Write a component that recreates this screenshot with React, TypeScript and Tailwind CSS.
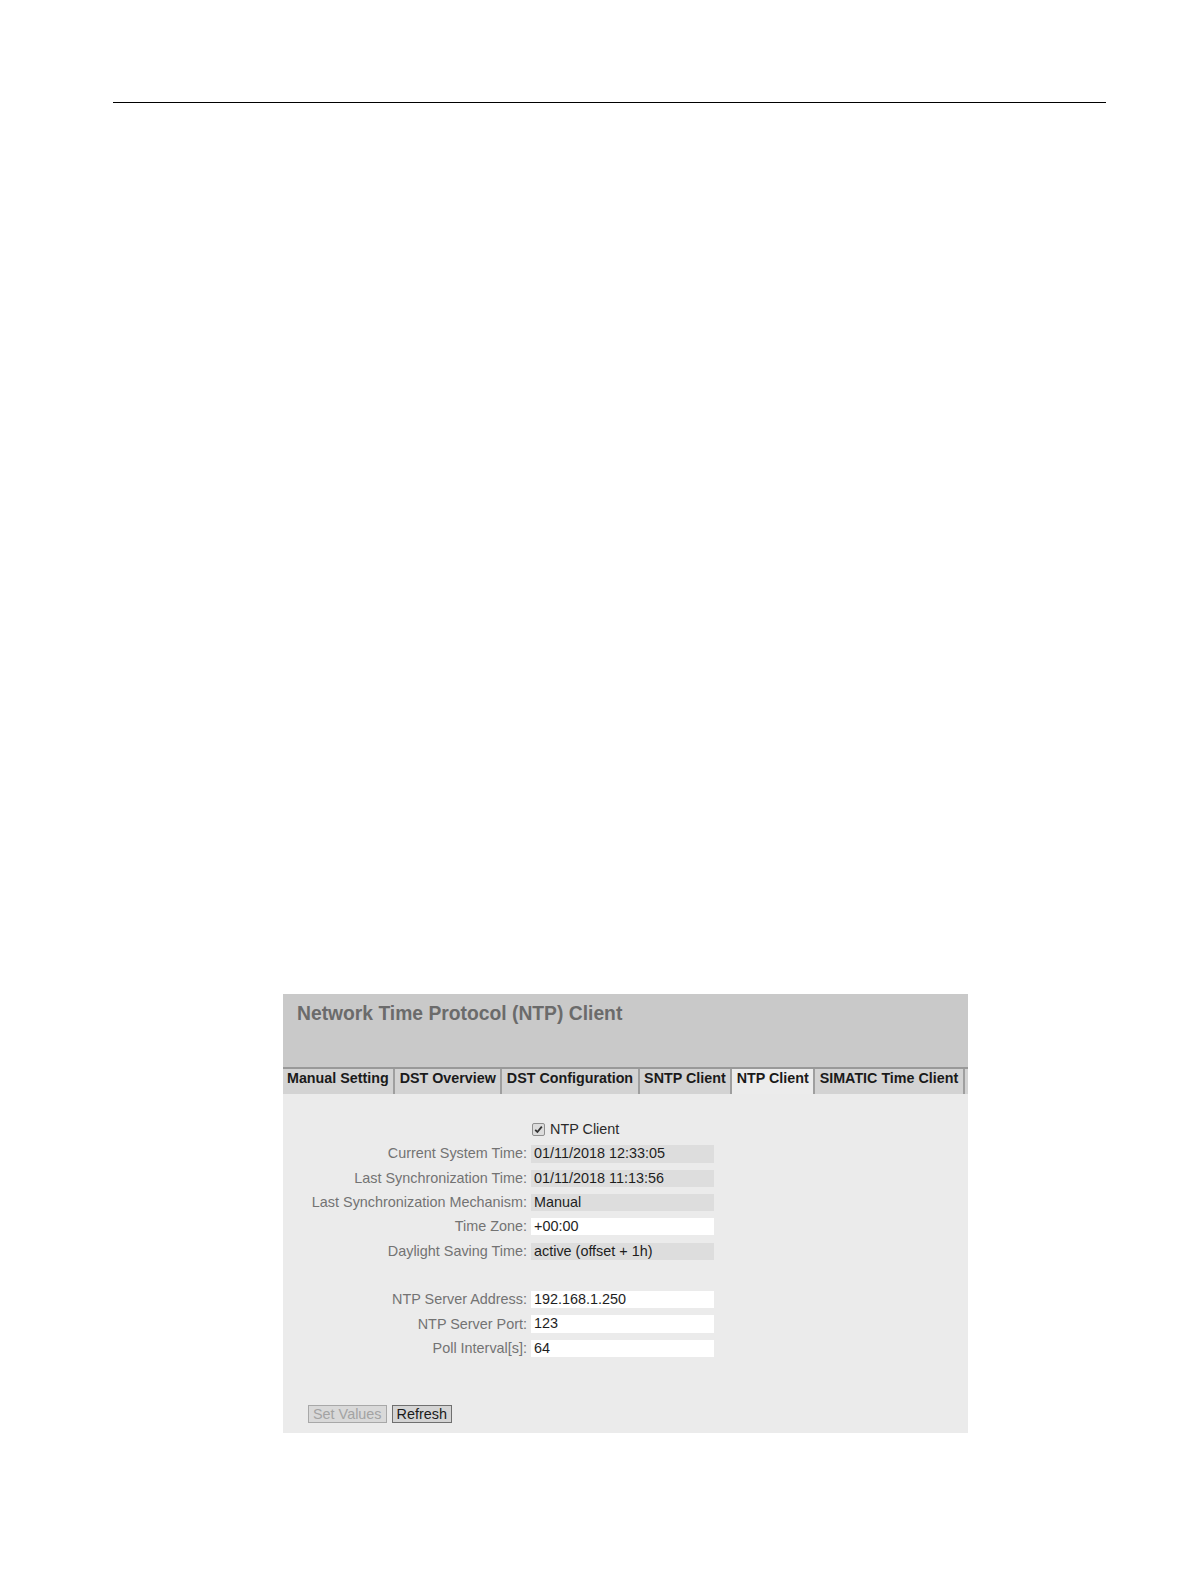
import React from "react";

const tabs = [
  { name: "Manual Setting", active: false },
  { name: "DST Overview", active: false },
  { name: "DST Configuration", active: false },
  { name: "SNTP Client", active: false },
  { name: "NTP Client", active: true },
  { name: "SIMATIC Time Client", active: false },
];

const rows1: { label: string; value: string; editable: boolean }[] = [
  { label: "Current System Time:", value: "01/11/2018 12:33:05", editable: false },
  { label: "Last Synchronization Time:", value: "01/11/2018 11:13:56", editable: false },
  { label: "Last Synchronization Mechanism:", value: "Manual", editable: false },
  { label: "Time Zone:", value: "+00:00", editable: true },
  { label: "Daylight Saving Time:", value: "active (offset + 1h)", editable: false },
];

const rows2: { label: string; value: string; editable: boolean }[] = [
  { label: "NTP Server Address:", value: "192.168.1.250", editable: true },
  { label: "NTP Server Port:", value: "123", editable: true },
  { label: "Poll Interval[s]:", value: "64", editable: true },
];

function FormRow({ label, value, editable }: { label: string; value: string; editable: boolean }) {
  return (
    <div className="flex h-[24.3px] items-center">
      <div className="w-[244px] whitespace-nowrap text-right text-[14.4px] leading-[17px] text-[#737373]">
        {label}
      </div>
      <div
        className={
          "ml-[4px] h-[17.2px] w-[183px] pl-[3px] text-[14.4px] leading-[17.2px] text-[#1e1e1e] " +
          (editable ? "bg-white" : "bg-[#dddddd]")
        }
      >
        {value}
      </div>
    </div>
  );
}

export default function App() {
  return (
    <div
      className="w-full overflow-hidden bg-white pb-[100px]"
      style={{ fontFamily: '"Liberation Sans", Arial, sans-serif' }}
    >
      <div className="pt-[102px]">
        <div className="ml-[113px] h-px w-[993px] bg-black" />
      </div>

      <div className="ml-[283px] mt-[891px] w-[685px] bg-[#ebebeb]">
        {/* Header */}
        <div className="h-[73px] bg-[#c9c9c9] pl-[14px] pt-[9px]">
          <div className="text-[19.3px] font-bold leading-[22px] text-[#6b6b6b]">
            Network Time Protocol (NTP) Client
          </div>
        </div>

        {/* Tabs */}
        <div className="flex h-[27px] border-t-2 border-[#999999] bg-[#d3d3d3]">
          {tabs.map((t, i) => (
            <div
              key={t.name}
              className={
                "whitespace-nowrap border-r-2 border-[#9f9f9f] pt-[1px] text-[14.3px] font-bold leading-[17px] text-[#1a1a1a] " +
                (i === 0 ? "pl-[4px] pr-[4.5px] " : "px-[4.5px] ") +
                (t.active ? "bg-[#ececec]" : "bg-[#d3d3d3]")
              }
            >
              {t.name}
            </div>
          ))}
        </div>

        {/* Content */}
        <div className="pt-[23.5px]">
          <div className="flex h-[24.3px] items-center">
            <div className="w-[244px]" />
            <div className="ml-[5px] flex items-center">
              <span className="flex h-[13px] w-[13px] items-center justify-center rounded-[2px] border border-[#8f8f8f] bg-[#dcdcdc]">
                <svg width="9" height="9" viewBox="0 0 9 9">
                  <path d="M1.2 4.8 L3.4 7 L7.8 1.6" fill="none" stroke="#333333" strokeWidth="1.8" />
                </svg>
              </span>
              <span className="ml-[5px] text-[14.4px] leading-[17px] text-[#2a2a2a]">NTP Client</span>
            </div>
          </div>
          {rows1.map((r) => (
            <FormRow key={r.label} {...r} />
          ))}
          <div className="h-[24.3px]" />
          {rows2.map((r) => (
            <FormRow key={r.label} {...r} />
          ))}

          <div className="mt-[44.5px] flex gap-[5px] pb-[10px] pl-[25px]">
            <button
              disabled
              className="h-[18.2px] border border-[#a8a8a8] bg-[#d9d9d9] px-[4px] text-[14.4px] leading-[16px] text-[#a3a3a3]"
              style={{ fontFamily: '"Liberation Sans", Arial, sans-serif' }}
            >
              Set Values
            </button>
            <button
              className="h-[18.2px] border border-[#6f6f6f] bg-[#d4d4d4] px-[4px] text-[14.4px] leading-[16px] text-[#1a1a1a]"
              style={{ fontFamily: '"Liberation Sans", Arial, sans-serif' }}
            >
              Refresh
            </button>
          </div>
        </div>
      </div>
    </div>
  );
}
